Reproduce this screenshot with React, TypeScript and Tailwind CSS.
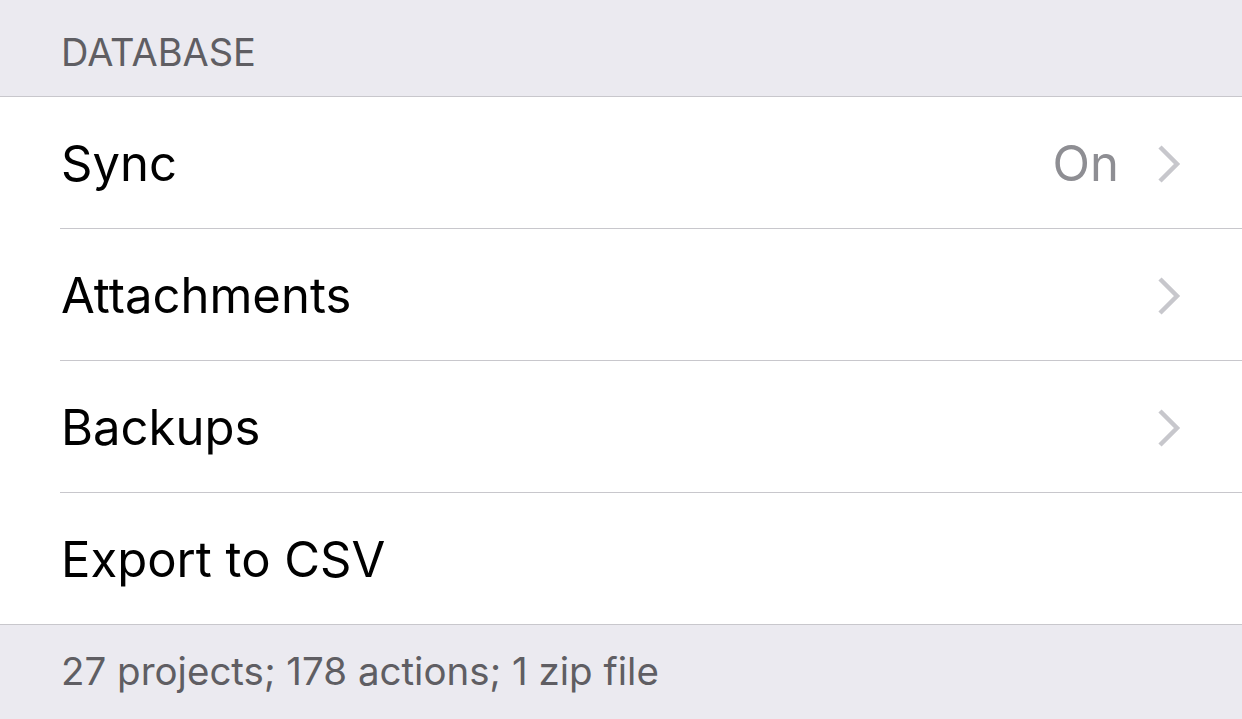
import React from "react";

const rows = [
  { label: "Sync", value: "On", chevron: true },
  { label: "Attachments", chevron: true },
  { label: "Backups", chevron: true },
  { label: "Export to CSV" },
];

const Chevron = () => (
  <svg width="26" height="40" viewBox="0 0 26 40" className="ml-[37px]">
    <path d="M4 3 L21 20 L4 37" fill="none" stroke="#c7c7cc" strokeWidth="4.5" />
  </svg>
);

const App = () => {
  return (
    <div className="w-[1242px] h-[719px] bg-[#ebeaf0] overflow-hidden" style={{ fontFamily: "Inter, 'Noto Sans', sans-serif" }}>
      {/* header */}
      <div className="h-[96px] pl-[61px] pt-[33px]">
        <div className="text-[38px] leading-none text-[#5f5e63]">DATABASE</div>
      </div>
      {/* rows */}
      <div className="bg-white border-y border-[#c8c7cc]">
        {rows.map((r, i) => {
          const last = i === rows.length - 1;
          return (
            <div key={r.label} className="pl-[60px]">
              <div className={`flex items-center pr-[60px] pt-[2px] ${last ? "h-[131px]" : "h-[132px] border-b border-[#c8c7cc]"}`}>
                <span className="flex-1 pl-[1px] text-[49px] leading-none text-black">{r.label}</span>
                {r.value && <span className="text-[49px] leading-none text-[#8e8e93]">{r.value}</span>}
                {r.chevron && <Chevron />}
              </div>
            </div>
          );
        })}
      </div>
      {/* footer */}
      <div className="pl-[61px] pt-[27px]">
        <div className="text-[38.5px] leading-none text-[#5f5e63]">27 projects; 178 actions; 1 zip file</div>
      </div>
    </div>
  );
};

export default App;
